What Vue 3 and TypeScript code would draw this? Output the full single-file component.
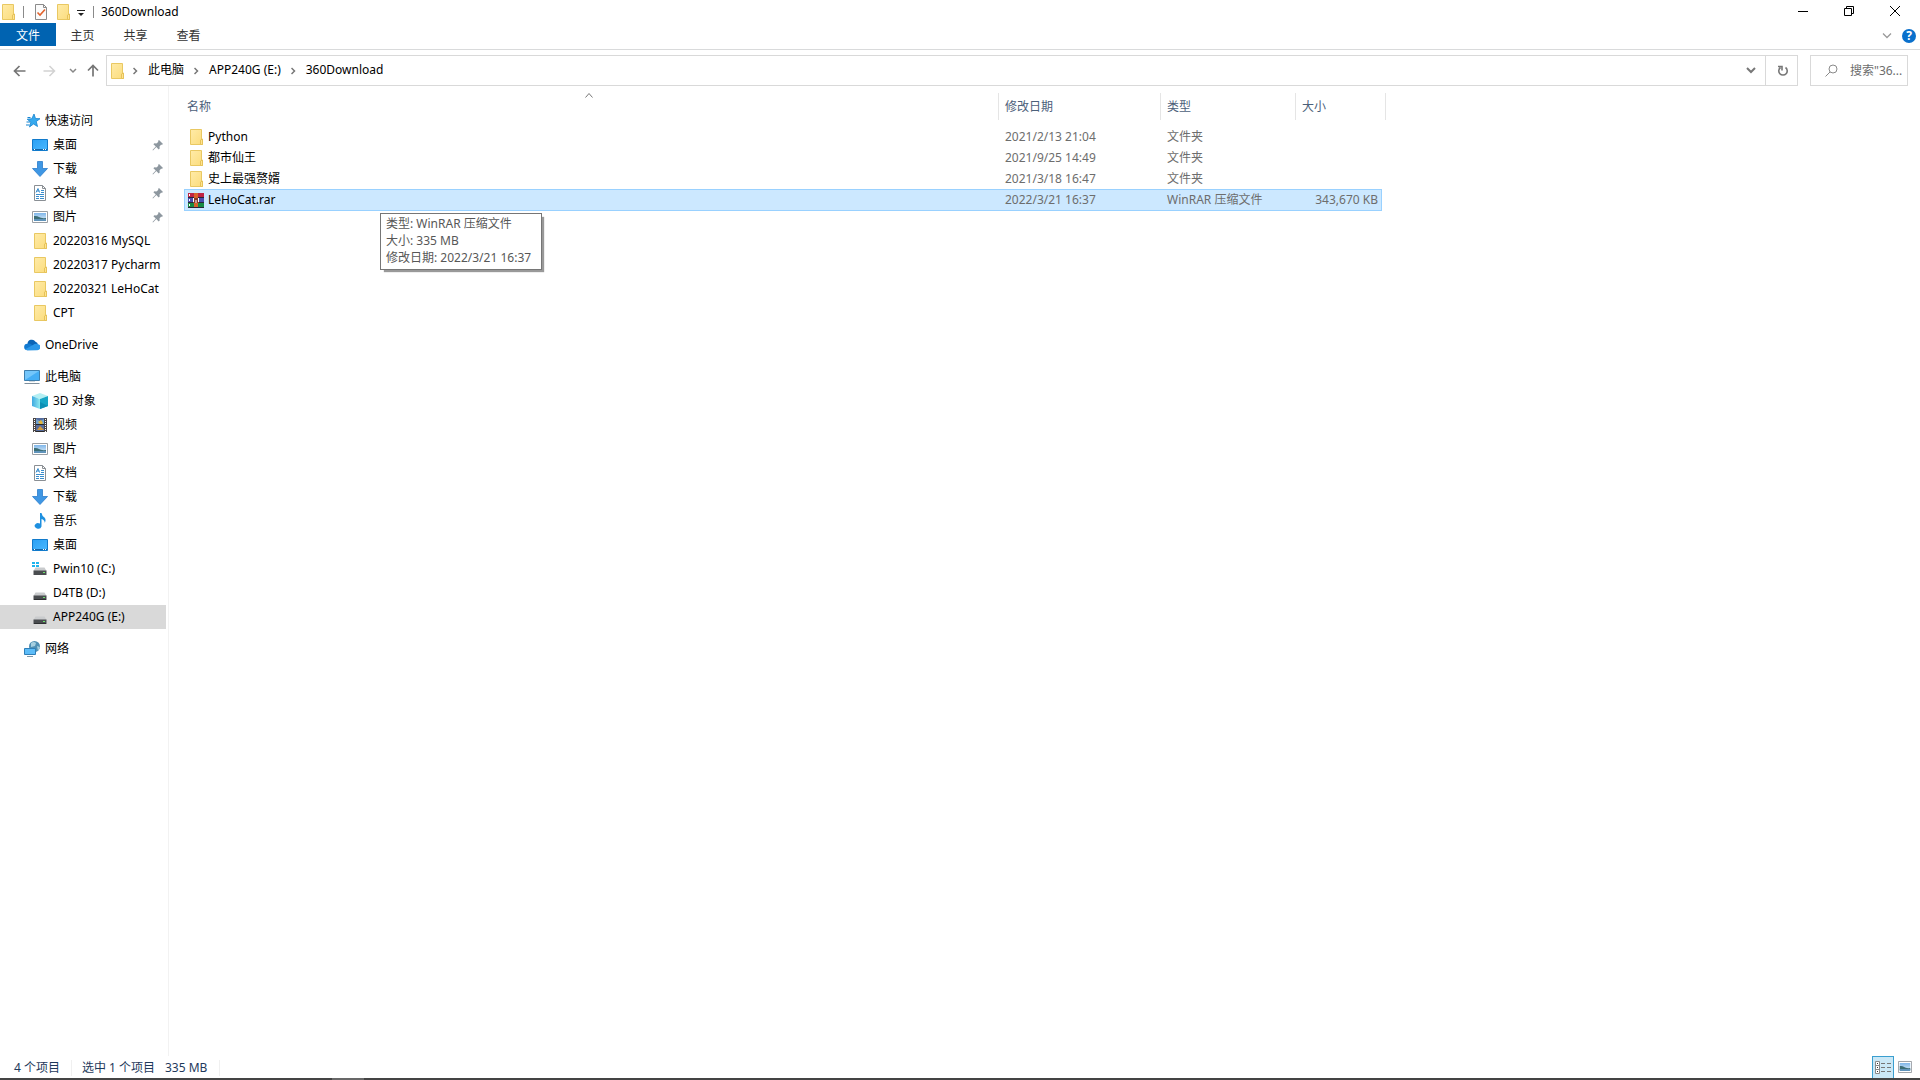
<script setup lang="ts">
import { ref } from 'vue'

interface NavItem {
  label: string
  icon: string
  root?: boolean
  gap?: boolean
  pinned?: boolean
  selected?: boolean
}

interface FileRow {
  name: string
  icon: string
  date: string
  type: string
  size: string
  selected?: boolean
}

const tabs: string[] = ['主页', '共享', '查看']
const crumbs: string[] = ['此电脑', 'APP240G (E:)', '360Download']
const query = ref('')

const nav: NavItem[] = [
  { label: '快速访问', icon: 'star', root: true },
  { label: '桌面', icon: 'desktop', pinned: true },
  { label: '下载', icon: 'download', pinned: true },
  { label: '文档', icon: 'document', pinned: true },
  { label: '图片', icon: 'picture', pinned: true },
  { label: '20220316 MySQL', icon: 'folder' },
  { label: '20220317 Pycharm', icon: 'folder' },
  { label: '20220321 LeHoCat', icon: 'folder' },
  { label: 'CPT', icon: 'folder' },
  { label: 'OneDrive', icon: 'cloud', root: true, gap: true },
  { label: '此电脑', icon: 'pc', root: true, gap: true },
  { label: '3D 对象', icon: 'cube' },
  { label: '视频', icon: 'video' },
  { label: '图片', icon: 'picture' },
  { label: '文档', icon: 'document' },
  { label: '下载', icon: 'download' },
  { label: '音乐', icon: 'music' },
  { label: '桌面', icon: 'desktop' },
  { label: 'Pwin10 (C:)', icon: 'sysdrive' },
  { label: 'D4TB (D:)', icon: 'drive' },
  { label: 'APP240G (E:)', icon: 'drive', selected: true },
  { label: '网络', icon: 'network', root: true, gap: true },
]

const files: FileRow[] = [
  { name: 'Python', icon: 'folder', date: '2021/2/13 21:04', type: '文件夹', size: '' },
  { name: '都市仙王', icon: 'folder', date: '2021/9/25 14:49', type: '文件夹', size: '' },
  { name: '史上最强赘婿', icon: 'folder', date: '2021/3/18 16:47', type: '文件夹', size: '' },
  { name: 'LeHoCat.rar', icon: 'rar', date: '2022/3/21 16:37', type: 'WinRAR 压缩文件', size: '343,670 KB', selected: true },
]
</script>

<template>
  <div class="window">
    <svg class="defs" aria-hidden="true">
      <linearGradient id="g-folder" x1="0" y1="0" x2="1" y2="1">
        <stop offset="0" stop-color="#ffeba8" /><stop offset="1" stop-color="#fbdc7c" />
      </linearGradient>
      <linearGradient id="g-screen" x1="0" y1="0" x2="1" y2="1">
        <stop offset="0" stop-color="#2aa0f4" /><stop offset="1" stop-color="#4ab8ff" />
      </linearGradient>
      <linearGradient id="g-sky" x1="0" y1="0" x2="0" y2="1">
        <stop offset="0" stop-color="#7fb6ea" /><stop offset="1" stop-color="#e3f1f8" />
      </linearGradient>
      <linearGradient id="g-cube" x1="0" y1="0" x2="1" y2="0">
        <stop offset="0" stop-color="#3fa9e0" /><stop offset="1" stop-color="#8feaf0" />
      </linearGradient>
      <symbol id="i-folder" viewBox="0 0 16 16">
        <path d="M2.5.5h11v10h1v5h-12z" fill="url(#g-folder)" stroke="#e9c862" />
        <path d="M12.500 15.500v-4.500l2-1v5.500z" fill="#ffe48f" stroke="#e6c25a" />
      </symbol>
      <symbol id="i-star" viewBox="0 0 16 16">
        <path d="M10 1l1.500 4.500 4.500.2-3.700 2.800 1.200 5L9.500 11l-4 3 1.300-4.800L3.200 6.200l4.600-.5z" fill="#36a9ee" stroke="#1583cf" stroke-width=".8" />
        <path d="M3.500 4.500h3M2.500 9H6M2 12h3.500" stroke="#1583cf" />
      </symbol>
      <symbol id="i-desktop" viewBox="0 0 16 16">
        <path d="M.5 2.500h15v11H.5z" fill="url(#g-screen)" stroke="#127acb" />
        <path d="M1 12.500h14" stroke="#1467aa" />
        <path d="M2 12.500h1M11 12.500h1M13 12.500h1" stroke="#fff" />
      </symbol>
      <symbol id="i-download" viewBox="0 0 16 16">
        <path d="M5.500.5h5v7h5L8 15.500.500 7.500h5z" fill="#3f97e4" stroke="#2b7ccb" stroke-width=".8" />
      </symbol>
      <symbol id="i-document" viewBox="0 0 16 16">
        <path d="M2.500.5h8l3 3v12h-11z" fill="#fff" stroke="#8a8f94" />
        <path d="M10.500.5v3h3" fill="none" stroke="#8a8f94" />
        <path d="M4 7.500l2-4 1.500 4M4.500 6h3M9 5.500h3M9 7.500h3M4 9.500h8M4 11.500h3M8 11.500h4M4 13.500h3M8 13.500h4" fill="none" stroke="#3a8dcc" />
      </symbol>
      <symbol id="i-picture" viewBox="0 0 16 16">
        <path d="M.5 2.500h15v11H.5z" fill="#fff" stroke="#9a9fa4" />
        <path d="M2 4h12v8H2z" fill="url(#g-sky)" />
        <path d="M2 7q3-.5 5 1t7 1v2H2z" fill="#3c6e76" />
        <path d="M2 10h12v2H2z" fill="#5f93ba" />
      </symbol>
      <symbol id="i-cloud" viewBox="0 0 16 16">
        <path d="M3.500 7A4.300 4.300 0 0 1 11.500 4.800 3.600 3.600 0 0 1 14 7.500L8 11z" fill="#0a64b6" />
        <path d="M3.200 13.200A3.200 3.200 0 0 1 3.500 6.800q2-.6 4 .7L13 13z" fill="#1179d0" />
        <path d="M1 12.200l8-4.200Q11 6.200 13.300 6.900A3.200 3.200 0 0 1 13 13.300H3.500q-1.500 0-2.500-1.100z" fill="#2a97e8" />
      </symbol>
      <symbol id="i-pc" viewBox="0 0 16 16">
        <path d="M.5 1.500h15v10H.5z" fill="#45aef5" stroke="#3e7fae" />
        <path d="M1 11V2h14z" fill="#74c6fb" />
        <path d="M5 12.500h6" stroke="#cfd8de" /><path d="M.5 14.500h15" stroke="#7f8f9c" />
      </symbol>
      <symbol id="i-cube" viewBox="0 0 16 16">
        <path d="M0 3l8-3 8 3-8 3z" fill="#b4eff3" />
        <path d="M0 3l8 3v10l-8-3z" fill="url(#g-cube)" /><path d="M16 3L8 6v10l8-3z" fill="#17a6c6" />
        <path d="M8 9v7l8-3z" fill="#0e8fb4" />
      </symbol>
      <symbol id="i-video" viewBox="0 0 16 16">
        <path d="M1 1h14v14H1z" fill="#4a4545" />
        <path d="M4 1h8v14H4z" fill="#566b9b" />
        <path d="M4 2l4 2 4-2v6H4z" fill="#6ea0d0" /><path d="M6 5l3-2 2 3-2 2z" fill="#e3b53a" />
        <path d="M4 7.500h8M4 14.500h8" stroke="#2a2a2a" /><path d="M5 13l3-4 4 4z" fill="#d49a3a" />
        <path d="M2.500 2v13M13.500 2v13" stroke="#fff" stroke-dasharray="1 1" />
      </symbol>
      <symbol id="i-music" viewBox="0 0 16 16">
        <path d="M8 0h1.500q.5 3 3 4.500 2 2 .2 5.500.2-3-3.200-4v7.500A3.500 2.700 0 1 1 8 10.600z" fill="#1e90e0" />
      </symbol>
      <symbol id="i-drive" viewBox="0 0 16 16">
        <path d="M3.500 7.500h9L14.500 11H1.500z" fill="#c9cbcd" />
        <path d="M1.500 10.500h13V15h-13z" fill="#4a4d50" /><path d="M2 14.500h12" stroke="#2e3032" />
        <path d="M11 12h2v1h-2z" fill="#6be36b" />
      </symbol>
      <symbol id="i-sysdrive" viewBox="0 0 16 16">
        <path d="M3.500 6.500h9l2 3.500h-13z" fill="#c9cbcd" />
        <path d="M1.500 9.500h13V14h-13z" fill="#4a4d50" /><path d="M11 11h2v1h-2z" fill="#6be36b" />
        <path d="M0 1h3v2H0zM4 1h3v2H4zM0 4h3v2H0zM4 4h3v2H4z" fill="#1fb4ee" />
      </symbol>
      <symbol id="i-network" viewBox="0 0 16 16">
        <circle cx="10.500" cy="5.500" r="5.500" fill="#4f8fb3" />
        <path d="M7 2q3-2 5 0l-1 3-4 1zM13 5l3 1-2 4z" fill="#a6cfe0" />
        <path d="M.5 7.500h11v6H.5z" fill="#5cbcf8" stroke="#2f7fb8" /><path d="M3 15.500h6" stroke="#7f98a8" />
      </symbol>
      <symbol id="i-rar" viewBox="0 0 16 16">
        <path d="M0 1h16v5H0z" fill="#c02444" /><path d="M0 6h16v4H0z" fill="#4a4eae" /><path d="M0 10h16v5H0z" fill="#178a43" />
        <path d="M0 5.500h16M0 10.500h16M0 15.500h16" stroke="#2b2438" /><path d="M1.500 2v2M1.500 7v2M1.500 12v2" stroke="#fff" />
        <path d="M6 1h4v14H6z" fill="#d9632b" /><path d="M5 6h6v5H5z" fill="#8a3b2c" />
        <path d="M5.500 6v4M8 8v3M10.500 6v4" stroke="#fff" />
      </symbol>
      <symbol id="i-pin" viewBox="0 0 12 12">
        <path d="M7 1l4 4-1 .8-1 0-1.500 1.700.2 2-1 1-2.400-2.400L1 11.500.5 11l3.300-3.400L1.400 5.200l1-1 2 .3L6.200 3V1.800z" fill="#8d979f" />
      </symbol>
    </svg>

    <header class="titlebar">
      <svg class="icon"><use href="#i-folder" /></svg>
      <span class="rule first"></span>
      <button class="quick" aria-label="属性">
        <svg class="icon" viewBox="0 0 16 16">
          <path d="M2.500.5h8l3 3v12h-11z" fill="#fbfbfb" stroke="#8b8b8b" /><path d="M10.500.5v3h3" fill="none" stroke="#8b8b8b" />
          <path d="M4.500 8.500l2.500 2.500 5-5.500" fill="none" stroke="#e2622c" stroke-width="1.600" />
        </svg>
      </button>
      <button class="quick" aria-label="新建文件夹"><svg class="icon"><use href="#i-folder" /></svg></button>
      <button class="more" aria-label="自定义快速访问工具栏">
        <svg width="8" height="8" viewBox="0 0 8 8"><path d="M0 1.500h8" stroke="#222" /><path d="M1 4h6L4 7z" fill="#222" /></svg>
      </button>
      <span class="rule"></span>
      <span class="title">360Download</span>
      <div class="controls">
        <button aria-label="最小化"><svg width="10" height="10"><path d="M0 5.500h10" stroke="#000" /></svg></button>
        <button aria-label="向下还原">
          <svg width="10" height="10"><path d="M.5 2.500h7v7h-7zM2.500 2.500v-2h7v7h-2" fill="none" stroke="#000" /></svg>
        </button>
        <button aria-label="关闭"><svg width="10" height="10"><path d="M0 0l10 10M10 0L0 10" stroke="#000" /></svg></button>
      </div>
    </header>

    <nav class="ribbon">
      <button class="file">文件</button>
      <button v-for="tab in tabs" :key="tab" class="tab">{{ tab }}</button>
      <span class="spacer"></span>
      <button class="expand" aria-label="展开功能区">
        <svg width="10" height="6"><path d="M1 .5l4 4 4-4" fill="none" stroke="#9a9a9a" stroke-width="1.300" /></svg>
      </button>
      <button class="help" aria-label="帮助">?</button>
    </nav>

    <div class="address-row">
      <div class="history">
        <button aria-label="返回"><svg width="13" height="12"><path d="M12.500 6H1.500M6.500 1l-5 5 5 5" fill="none" stroke="#757575" stroke-width="1.700" /></svg></button>
        <button aria-label="前进"><svg width="13" height="12"><path d="M.5 6h11M6.500 1l5 5-5 5" fill="none" stroke="#d2d2d2" stroke-width="1.500" /></svg></button>
        <button class="narrow" aria-label="最近浏览的位置"><svg width="8" height="6"><path d="M1 1l3 3 3-3" fill="none" stroke="#888" stroke-width="1.500" /></svg></button>
        <button class="up" aria-label="上移"><svg width="12" height="13"><path d="M6 12.500V1.500M1 6.500l5-5 5 5" fill="none" stroke="#757575" stroke-width="1.700" /></svg></button>
      </div>
      <div class="address">
        <svg class="icon"><use href="#i-folder" /></svg>
        <template v-for="crumb in crumbs" :key="crumb">
          <svg class="sep" width="5" height="8"><path d="M.5 1l3 3-3 3" fill="none" stroke="#777" stroke-width="1.500" /></svg>
          <a href="#">{{ crumb }}</a>
        </template>
        <span class="spacer"></span>
        <button class="drop" aria-label="以前的位置"><svg width="10" height="7"><path d="M1 1l4 4 4-4" fill="none" stroke="#777" stroke-width="2" /></svg></button>
        <button class="refresh" aria-label="刷新">
          <svg width="12" height="12"><path d="M4.500 2.500A4.200 4.200 0 1 0 9.500 2.500M2 1.500h4v4" fill="none" stroke="#777" stroke-width="1.600" /></svg>
        </button>
      </div>
      <label class="search">
        <svg width="13" height="13"><circle cx="8" cy="5" r="4" fill="none" stroke="#8a8a8a" /><path d="M5 8L.5 12.500" stroke="#8a8a8a" /></svg>
        <input v-model="query" type="text" aria-label="搜索" placeholder="搜索&quot;36..." />
      </label>
    </div>

    <div class="body">
      <nav class="sidebar">
        <a
          v-for="(item, i) in nav"
          :key="i"
          href="#"
          class="item"
          :class="{ root: item.root, gap: item.gap, selected: item.selected }"
        >
          <svg class="icon"><use :href="'#i-' + item.icon" /></svg>
          <span class="label">{{ item.label }}</span>
          <svg v-if="item.pinned" class="pin"><use href="#i-pin" /></svg>
        </a>
      </nav>

      <main class="content">
        <table class="files">
          <thead>
            <tr>
              <th class="c-name">
                <div>名称<svg class="sort" width="8" height="5"><path d="M.5 4.500l3.500-4 3.500 4" fill="none" stroke="#777" /></svg></div>
              </th>
              <th class="c-date"><div>修改日期</div></th>
              <th class="c-type"><div>类型</div></th>
              <th class="c-size"><div>大小</div></th>
            </tr>
          </thead>
          <tbody>
            <tr v-for="file in files" :key="file.name" :class="{ selected: file.selected }">
              <td class="name">
                <div class="entry"><svg class="icon"><use :href="'#i-' + file.icon" /></svg>{{ file.name }}</div>
                <div v-if="file.selected" class="tip" role="tooltip">
                  <div>类型: WinRAR 压缩文件</div>
                  <div>大小: 335 MB</div>
                  <div>修改日期: 2022/3/21 16:37</div>
                </div>
              </td>
              <td>{{ file.date }}</td>
              <td>{{ file.type }}</td>
              <td class="size">{{ file.size }}</td>
            </tr>
          </tbody>
        </table>
      </main>
    </div>

    <footer class="status">
      <span class="count">4 个项目</span>
      <span class="chosen">选中 1 个项目</span>
      <span class="bytes">335 MB</span>
      <span class="spacer"></span>
      <button class="view active" aria-label="详细信息">
        <svg width="18" height="14">
          <path d="M1.500.5h4v12h-4zM1.500 4.500h4M1.500 8.500h4" fill="#fff" stroke="#8a8a8a" />
          <path d="M3 2.500h1M3 6.500h1M3 10.500h1" stroke="#333" />
          <path d="M7 2.500h4M13 2.500h4M7 6.500h4M13 6.500h4M7 10.500h4M13 10.500h4" stroke="#777" />
        </svg>
      </button>
      <button class="view" aria-label="大图标"><svg width="14" height="12" viewBox="0 2 16 12" preserveAspectRatio="none"><use href="#i-picture" width="16" height="16" /></svg></button>
    </footer>
    <div class="taskbar"><span></span></div>
  </div>
</template>

<style>
body {
  background: #fff;
}
</style>

<style scoped>
.window {
  display: flex;
  flex-direction: column;
  min-height: 100vh;
  font: 12px/16px "Noto Sans", "Noto Sans CJK SC", sans-serif;
  color: #000;
  background: #fff;
}
.window * {
  box-sizing: border-box;
}
.defs {
  position: absolute;
  width: 0;
  height: 0;
}
svg {
  display: block;
  flex: none;
}
.icon {
  width: 16px;
  height: 16px;
}
button {
  display: flex;
  align-items: center;
  justify-content: center;
  padding: 0;
  border: 0;
  background: none;
  font: inherit;
  color: inherit;
}
a {
  color: inherit;
  text-decoration: none;
}
.spacer {
  flex: 1;
}

.titlebar {
  display: flex;
  align-items: center;
  height: 23px;
}
.rule {
  width: 1px;
  height: 12px;
  margin: 0 7px 0 6px;
  background: #8a8a8a;
}
.rule.first {
  margin: 0 6px 0 7px;
}
.quick {
  width: 22px;
}
.more {
  width: 13px;
  margin-top: 2px;
}
.title {
  flex: 1;
}
.controls {
  display: flex;
  height: 21px;
  margin: 0 2px 2px 0;
}
.controls button {
  width: 46px;
}

.ribbon {
  display: flex;
  height: 27px;
  padding-bottom: 3px;
  border-bottom: 1px solid #d9dadb;
  color: #333;
}
.file,
.tab {
  padding-top: 2px;
}
.file {
  width: 56px;
  background: #0063b1;
  color: #fff;
}
.tab {
  width: 53px;
}
.expand {
  width: 20px;
  padding-top: 3px;
}
.help {
  width: 14px;
  height: 14px;
  margin: 6px 4px 0 5px;
  border-radius: 50%;
  background: #0a70cc;
  color: #fff;
  font-weight: 700;
}

.address-row {
  display: flex;
  height: 36px;
  padding: 5px 12px 0 0;
}
.history {
  display: flex;
  width: 106px;
  padding-left: 4px;
}
.history button {
  width: 30px;
}
.history .narrow {
  width: 18px;
}
.history .up {
  width: 22px;
}
.address {
  display: flex;
  flex: 1;
  align-items: center;
  padding-left: 2px;
  border: 1px solid #d9d9d9;
}
.address .icon {
  margin-right: -2px;
}
.address a {
  margin-bottom: 1px;
}
.sep {
  margin: 0 10px;
}
.drop {
  width: 29px;
  height: 100%;
}
.refresh {
  width: 32px;
  height: 100%;
  border-left: 1px solid #d9d9d9;
}
.search {
  display: flex;
  align-items: center;
  width: 98px;
  margin-left: 12px;
  padding-left: 14px;
  border: 1px solid #d9d9d9;
}
.search input {
  flex: 1;
  min-width: 0;
  margin-left: 12px;
  padding: 0;
  border: 0;
  outline: 0;
  background: none;
  font: inherit;
}
.search input::placeholder {
  color: #6d6d6d;
  opacity: 1;
}

.body {
  display: flex;
  flex: 1;
}
.sidebar {
  width: 169px;
  padding: 23px 2px 0 0;
  border-right: 1px solid #f2f2f2;
}
.item {
  display: flex;
  align-items: center;
  height: 24px;
  padding-left: 32px;
}
.item.root {
  padding-left: 24px;
}
.item.gap {
  margin-top: 8px;
}
.item.selected {
  background: #d9d9d9;
}
.label {
  flex: 1;
  margin-left: 5px;
  white-space: nowrap;
}
.pin {
  width: 12px;
  height: 12px;
  margin-right: 2px;
}

.content {
  flex: 1;
  padding: 7px 0 0 15px;
}
.files {
  width: 1198px;
  table-layout: fixed;
  border-collapse: collapse;
  color: #6d6d6d;
}
th {
  padding: 0 0 6px;
  font-weight: 400;
  text-align: left;
  color: #4c607a;
}
th div {
  position: relative;
  height: 27px;
  padding-left: 6px;
  border-right: 1px solid #e5e5e5;
  line-height: 27px;
}
.c-name {
  width: 815px;
}
.c-name div {
  padding-left: 3px;
}
.c-date {
  width: 162px;
}
.c-type {
  width: 135px;
}
.c-size div {
  margin-right: -4px;
}
.sort {
  position: absolute;
  top: 0;
  left: calc(50% - 6px);
}
td {
  height: 21px;
  padding: 0 4px 0 6px;
  white-space: nowrap;
}
td.name {
  position: relative;
  padding-left: 4px;
  color: #000;
}
.entry {
  display: flex;
  align-items: center;
  gap: 4px;
}
.size {
  text-align: right;
}
tr.selected {
  background: #cce8ff;
  outline: 1px solid #99d1ff;
  outline-offset: -1px;
}
tr.selected td {
  height: 22px;
}
.tip {
  position: absolute;
  top: 24px;
  left: 196px;
  min-width: 162px;
  padding: 1px 5px 3px;
  border: 1px solid #767676;
  background: #fff;
  box-shadow: 3px 3px 1px -1px #999;
  color: #575757;
  line-height: 17px;
}

.status {
  display: flex;
  align-items: center;
  height: 22px;
  padding-left: 14px;
  color: #1e395b;
}
.status span {
  margin-top: 2px;
}
.count {
  width: 58px;
  border-right: 1px solid #f0f0f0;
}
.chosen {
  width: 93px;
  padding-left: 10px;
}
.bytes {
  width: 55px;
  border-right: 1px solid #f0f0f0;
}
.view {
  width: 22px;
  height: 22px;
  margin-right: 4px;
}
.view.active {
  margin-right: 0;
  border: 1px solid #3a9fd0;
  border-bottom: 0;
  background: #cbe8f6;
}
.taskbar {
  height: 2px;
  padding-left: 332px;
  background: #444;
}
.taskbar span {
  display: block;
  width: 32px;
  height: 2px;
  background: #686868;
}
</style>
